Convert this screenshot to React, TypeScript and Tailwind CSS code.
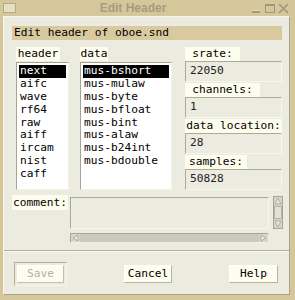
import React from "react";

const mono = "font-['DejaVu_Sans_Mono','Liberation_Mono',monospace] text-[11.2px]";

function ListBox({ items, width }: { items: string[]; width: string }) {
  return (
    <div className={`mt-[1px] h-[128px] ${width} bg-white border border-t-[#a8a48f] border-l-[#a8a48f] border-b-[#f4f2e6] border-r-[#f4f2e6] p-[2px] flex flex-col`}>
      {items.map((it, i) => (
        <div
          key={it}
          className={`h-[12.9px] leading-[12.9px] pl-[1px] ${mono} ${i === 0 ? "bg-black text-white" : "text-black"}`}
        >
          {it}
        </div>
      ))}
    </div>
  );
}

function Label({ text, cls }: { text: string; cls: string }) {
  return (
    <div className={`h-[14px] leading-[14px] bg-[#fdfdee] text-black text-center whitespace-nowrap ${mono} ${cls}`}>
      {text}
    </div>
  );
}

function Field({ value }: { value: string }) {
  return (
    <div className={`h-[21px] w-[97px] bg-[#ecebe0] border border-t-[#aeaa96] border-l-[#aeaa96] border-b-[#f8f6ec] border-r-[#f8f6ec] pl-[4px] flex items-center text-[#222] ${mono}`}>
      {value}
    </div>
  );
}

export default function App() {
  return (
    <div className="w-[295px] h-[300px] bg-[#d6c79b] flex flex-col overflow-hidden">
      {/* title bar */}
      <div className="h-[16px] flex items-start">
        <div className="ml-[3px] mt-[3px] w-[13px] h-[10px] border border-[#b3aa8a] bg-[#e6dfc4]" />
        <div className="flex-1 text-center font-['Liberation_Sans',Arial,sans-serif] font-bold text-[12px] leading-[16px] text-[#a59c7e]">
          Edit Header
        </div>
        <div className="mr-[5px] mt-[3px] flex gap-[1px]">
          <svg width="12" height="11" viewBox="0 0 12 11">
            <rect x="2" y="7" width="8" height="3" fill="#9c9784" />
            <rect x="2" y="7" width="8" height="1" fill="#e4dcc0" />
          </svg>
          <svg width="13" height="11" viewBox="0 0 13 11">
            <rect x="2.5" y="1.5" width="9" height="8" fill="none" stroke="#9c9784" strokeWidth="1" />
            <rect x="2" y="1" width="10" height="2" fill="#9c9784" />
          </svg>
          <svg width="13" height="11" viewBox="0 0 13 11">
            <path d="M2 1 L11 10 M11 1 L2 10" stroke="#9c9784" strokeWidth="1.6" />
          </svg>
        </div>
      </div>

      {/* panel */}
      <div className="ml-[3px] mr-[5px] mb-[5px] flex-1 bg-[#ecebe0] border border-t-[#f7f5ea] border-l-[#f7f5ea] border-r-[#a9a38d] border-b-[#a9a38d] flex flex-col">
        {/* header bar */}
        <div className={`mt-[9px] ml-[8px] w-[270px] h-[14px] leading-[14px] bg-[#d8ca9e] pl-[2px] text-black ${mono}`}>
          Edit header of oboe.snd
        </div>

        {/* main row */}
        <div className="mt-[7px] pl-[12px] flex items-start">
          <div className="w-[53px] flex flex-col">
            <Label text="header" cls="w-[44px]" />
            <ListBox
              width="w-[53px]"
              items={["next", "aifc", "wave", "rf64", "raw", "aiff", "ircam", "nist", "caff"]}
            />
          </div>
          <div className="ml-[11px] w-[92px] flex flex-col">
            <Label text="data" cls="w-[28px]" />
            <ListBox
              width="w-[92px]"
              items={[
                "mus-bshort",
                "mus-mulaw",
                "mus-byte",
                "mus-bfloat",
                "mus-bint",
                "mus-alaw",
                "mus-b24int",
                "mus-bdouble",
              ]}
            />
          </div>
          <div className="ml-[13px] w-[97px] flex flex-col">
            <Label text="srate:" cls="w-[55px]" />
            <Field value="22050" />
            <div className="mt-[1px]">
              <Label text="channels:" cls="w-[75px]" />
            </div>
            <Field value="1" />
            <div className="mt-[1px]">
              <Label text="data location:" cls="w-[97px]" />
            </div>
            <Field value="28" />
            <div className="mt-[1px]">
              <Label text="samples:" cls="w-[62px]" />
            </div>
            <Field value="50828" />
          </div>
        </div>

        {/* comment row */}
        <div className="mt-[5px] pl-[8px] flex items-start">
          <div className={`w-[56px] h-[15px] leading-[15px] bg-[#fdfdee] text-black text-center ${mono}`}>comment:</div>
          <div className="ml-[2px] flex flex-col">
            <div className="flex items-start">
              <div className="mt-[2px] w-[199px] h-[32px] bg-[#ecebe0] border border-t-[#aeaa96] border-l-[#aeaa96] border-b-[#f8f6ec] border-r-[#f8f6ec]" />
              <div className="ml-[4px] mt-[1px] w-[10px] h-[33px] bg-[#d6d4c6] border border-[#a8a592] flex flex-col">
                <svg width="8" height="8" viewBox="0 0 8 8">
                  <path d="M1 7 L4 1 L7 7 Z" fill="#e8e6da" stroke="#a8a592" strokeWidth="0.8" />
                </svg>
                <div className="flex-1 mx-[0px] my-[1px] bg-[#e4e2d6] border border-[#b6b3a2]" />
                <svg width="8" height="8" viewBox="0 0 8 8">
                  <path d="M1 1 L4 7 L7 1 Z" fill="#e8e6da" stroke="#a8a592" strokeWidth="0.8" />
                </svg>
              </div>
            </div>
            <div className="mt-[4px] w-[199px] h-[10px] bg-[#cbc9bc] border border-t-[#a8a592] border-l-[#a8a592] border-b-[#f2f0e4] border-r-[#f2f0e4] flex items-center justify-between">
              <svg width="9" height="8" viewBox="0 0 9 8">
                <rect x="0" y="0" width="9" height="8" fill="#d8d6ca" />
                <path d="M7 1 L2 4 L7 7 Z" fill="#eceadf" stroke="#a29f8c" strokeWidth="0.8" />
              </svg>
              <svg width="9" height="8" viewBox="0 0 9 8">
                <rect x="0" y="0" width="9" height="8" fill="#d8d6ca" />
                <path d="M2 1 L7 4 L2 7 Z" fill="#eceadf" stroke="#a29f8c" strokeWidth="0.8" />
              </svg>
            </div>
          </div>
        </div>

        {/* separator */}
        <div className="mt-[7px] h-[2px] border-t border-t-[#b4ae96] border-b border-b-[#faf8ee]" />

        {/* buttons */}
        <div className="mt-[10px] pl-[10px] flex items-start">
          <div className="w-[53px] h-[24px] border border-t-[#b0ad9a] border-l-[#b0ad9a] border-b-[#f8f6ec] border-r-[#f8f6ec] p-[2px]">
            <div className={`w-full h-full bg-[#fdfdee] border border-t-[#ffffff] border-l-[#ffffff] border-b-[#c2bfae] border-r-[#c2bfae] flex items-center justify-center text-[#b3b0a0] ${mono}`}>
              Save
            </div>
          </div>
          <div className={`ml-[57px] mt-[3px] w-[48px] h-[18px] bg-[#fdfdee] border border-t-[#ffffff] border-l-[#ffffff] border-b-[#b8b4a0] border-r-[#b8b4a0] flex items-center justify-center text-black ${mono}`}>
            Cancel
          </div>
          <div className={`ml-[57px] mt-[3px] w-[49px] h-[18px] bg-[#fdfdee] border border-t-[#ffffff] border-l-[#ffffff] border-b-[#b8b4a0] border-r-[#b8b4a0] flex items-center justify-center text-black ${mono}`}>
            Help
          </div>
        </div>
      </div>
    </div>
  );
}
